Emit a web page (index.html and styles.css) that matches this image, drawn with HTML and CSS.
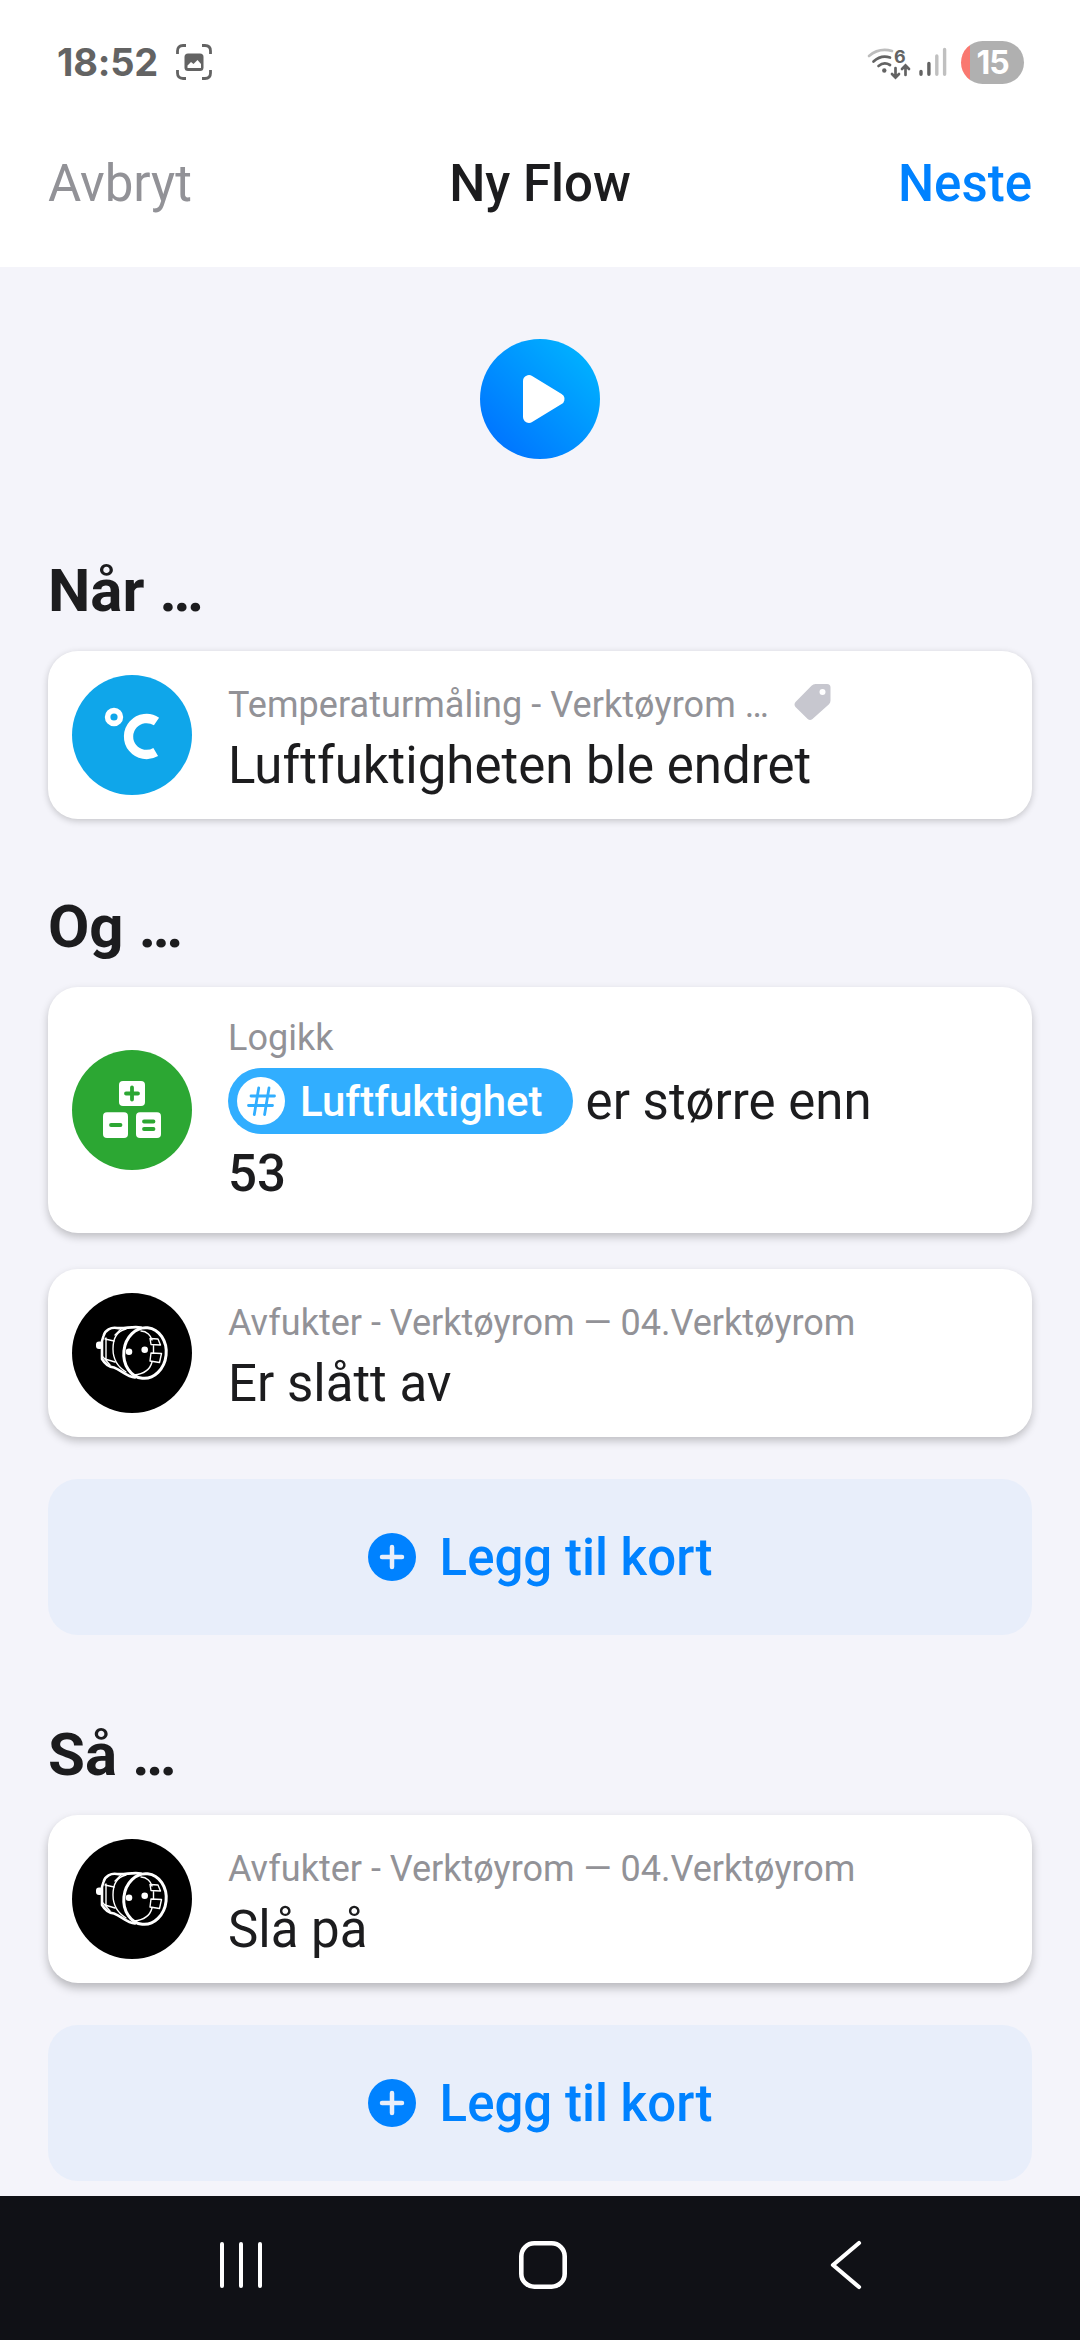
FILE: index.html
```html
<!DOCTYPE html>
<html lang="nb">
<head>
<meta charset="utf-8">
<title>Ny Flow</title>
<link rel="stylesheet" href="styles.css">
</head>
<body>
<svg class="defs" aria-hidden="true">
  <symbol id="plug" viewBox="0 0 120 120">
    <g fill="none" stroke="#fff" stroke-linejoin="round" stroke-linecap="round">
      <ellipse cx="73" cy="60" rx="21.2" ry="25.4" transform="rotate(6 73 60)" stroke-width="3"/>
      <path d="M69 34.500C60 33 53 36 45 35C39 34 33 37 31.500 43L30 48V66C33 71 37 74 42 74.500C49 77 55 84 63 84.500" stroke-width="2.600"/>
      <path d="M54 36C45 38 41 46 41 56C41 66 46 74 54 79" stroke-width="1.400"/>
      <path d="M33 46L42 48M34 45V66M33 66L43 69M31 64L38 72M50 35L43 42" stroke-width="1.400"/>
      <path d="M69 38C75 38 79 43 80 47M80 69C78 77 72 81 62 82" stroke-width="1.400"/>
      <path d="M78 45.500L86 46L88.500 52L79 51.500ZM81.500 52V60M79 60L89.500 60.500L87.500 69.500L78 68Z" stroke-width="1.400"/>
    </g>
    <rect x="24" y="48.500" width="7" height="7.500" rx="3" fill="#fff"/>
    <circle cx="57" cy="58.700" r="3.300" fill="#fff"/>
    <circle cx="72.700" cy="56.700" r="3.300" fill="#fff"/>
  </symbol>
  <symbol id="plus" viewBox="0 0 48 48">
    <circle cx="24" cy="24" r="24" fill="#0082ff"/>
    <path d="M24 14V34M14 24H34" stroke="#e8eefa" stroke-width="4.500" stroke-linecap="round"/>
  </symbol>
</svg>
<div class="screen">
  <header class="top">
    <div class="status">
      <div class="status-side">
        <span class="clock">18:52</span>
        <svg class="shot" viewBox="0 0 36 36">
          <path d="M1.500 10V7Q1.500 1.500 7 1.500H10M26 1.500H29Q34.500 1.500 34.500 7V10M34.500 26V29Q34.500 34.500 29 34.500H26M10 34.500H7Q1.500 34.500 1.500 29V26" fill="none" stroke="#636363" stroke-width="2.800"/>
          <rect x="8.500" y="9.500" width="19" height="17.500" rx="3.500" fill="#636363"/>
          <path d="M11.500 24V21.500L15 18L17.500 20L21.500 16L25 20V24Z" fill="#fff"/>
        </svg>
      </div>
      <div class="status-side">
        <svg class="wifi" viewBox="0 0 46 36">
          <g fill="none" stroke-width="2.700" stroke-linecap="round">
            <path d="M3 12Q13 3.500 26 7" stroke="#bdbdbd"/>
            <path d="M7.500 17.500Q15 10.500 24 13.500M12.500 22Q18 17.500 24 21" stroke="#636363"/>
            <path d="M29.500 24V33M26 30L29.500 33.500L33 30M39.500 31V22M36 25L39.500 21.500L43 25" stroke="#636363"/>
          </g>
          <circle cx="18.300" cy="26.500" r="2.200" fill="#636363"/>
          <text x="28" y="18.500" class="wifi-gen">6</text>
        </svg>
        <svg class="signal" viewBox="0 0 28 30">
          <g stroke-width="3.400" stroke-linecap="round">
            <path d="M2 24.500V27.300M9.900 16.500V27.300" stroke="#636363"/>
            <path d="M17.800 9V27.300M25.600 2.500V27.300" stroke="#c0c0c0"/>
          </g>
        </svg>
        <span class="battery">15</span>
      </div>
    </div>
    <nav class="bar">
      <span class="cancel">Avbryt</span>
      <h1 class="title">Ny Flow</h1>
      <span class="next">Neste</span>
    </nav>
  </header>

  <main class="flow">
    <svg class="play" viewBox="0 0 120 120">
      <defs>
        <linearGradient id="g" x1="0.150" y1="0.850" x2="0.850" y2="0.150">
          <stop offset="0" stop-color="#0077ff"/>
          <stop offset="1" stop-color="#00aeff"/>
        </linearGradient>
      </defs>
      <circle cx="60" cy="60" r="60" fill="url(#g)"/>
      <path d="M49 42V78L78.500 60Z" fill="#fff" stroke="#fff" stroke-width="12" stroke-linejoin="round"/>
    </svg>

    <section class="group">
      <h2 class="heading">Når …</h2>
      <article class="card">
        <svg class="icon" viewBox="0 0 120 120">
          <circle cx="60" cy="60" r="60" fill="#0fa6ea"/>
          <g fill="none" stroke="#fff">
            <circle cx="42" cy="42" r="6.400" stroke-width="5.600"/>
            <path d="M84.500 46.500A18 18 0 1 0 83.700 77" stroke-width="9.300"/>
          </g>
        </svg>
        <div class="text">
          <div class="source tagged"><span>Temperaturmåling - Verktøyrom …</span>
            <svg class="tag" viewBox="0 0 36 36">
              <path d="M21 0H32.500Q36 0 36 3.500V16.500Q36 18.500 34.500 20.200L18 35Q15.500 37 13.200 35L1 23Q-1 20.500 1 18L17 1.800Q18.700 0 21 0Z" fill="#c7c7cf"/>
              <circle cx="28" cy="8" r="3" fill="#fff"/>
            </svg>
          </div>
          <div class="line">Luftfuktigheten ble endret</div>
        </div>
      </article>
    </section>

    <section class="group">
      <h2 class="heading">Og …</h2>
      <article class="card mid">
        <svg class="icon" viewBox="0 0 120 120">
          <circle cx="60" cy="60" r="60" fill="#2ca733"/>
          <g fill="#fff">
            <rect x="47" y="31" width="26" height="25" rx="4"/>
            <rect x="31" y="62.300" width="25" height="25.700" rx="4"/>
            <rect x="64" y="62.300" width="25" height="25.700" rx="4"/>
          </g>
          <path d="M60 37.500V49.500M54 43.500H66M39 75H48.500M72 71.500H81.500M72 79H81.500" fill="none" stroke="#2ca733" stroke-width="3.800" stroke-linecap="round"/>
        </svg>
        <div class="text tall">
          <div class="source">Logikk</div>
          <div class="condition">
            <span class="token">
              <svg class="hash" viewBox="0 0 48 48">
                <circle cx="24" cy="24" r="24" fill="#fff"/>
                <path d="M14 19H37.500M11.500 28.500H35.500M21.700 11L17.300 37.500M32 11L27.600 37.500" stroke="#31aeff" stroke-width="2.800" stroke-linecap="round"/>
              </svg>
              <span>Luftfuktighet</span>
            </span>
            <span class="line">er større enn</span>
          </div>
          <div class="line value">53</div>
        </div>
      </article>
      <article class="card mid">
        <svg class="icon plug"><use href="#plug"/></svg>
        <div class="text">
          <div class="source">Avfukter - Verktøyrom — 04.Verktøyrom</div>
          <div class="line">Er slått av</div>
        </div>
      </article>
      <div class="add"><svg class="plus"><use href="#plus"/></svg><span class="add-label">Legg til kort</span></div>
    </section>

    <section class="group">
      <h2 class="heading">Så …</h2>
      <article class="card low">
        <svg class="icon plug"><use href="#plug"/></svg>
        <div class="text">
          <div class="source">Avfukter - Verktøyrom — 04.Verktøyrom</div>
          <div class="line">Slå på</div>
        </div>
      </article>
      <div class="add"><svg class="plus"><use href="#plus"/></svg><span class="add-label">Legg til kort</span></div>
    </section>
  </main>

  <footer class="system">
    <svg class="nav-icon" viewBox="0 0 52 52"><path d="M7 5V47M26 5V47M45 5V47" stroke="#fff" stroke-width="4" stroke-linecap="round"/></svg>
    <svg class="nav-icon" viewBox="0 0 52 52"><rect x="4.300" y="4.300" width="43.400" height="43.400" rx="13" fill="none" stroke="#fff" stroke-width="4.600"/></svg>
    <svg class="nav-icon" viewBox="0 0 52 52"><path d="M40 4L14 26L40 48" fill="none" stroke="#fff" stroke-width="4.200" stroke-linecap="round" stroke-linejoin="round"/></svg>
  </footer>
</div>
</body>
</html>
```
FILE: styles.css
```css
* { box-sizing: border-box; }

body {
  margin: 0;
  font-family: Roboto, "Liberation Sans", sans-serif;
  color: #1c1c1e;
  background: #f4f4fa;
}

h1, h2 { margin: 0; }
svg { display: block; flex: none; }
.defs { display: none; }

.screen {
  width: 1080px;
  height: 2340px;
  display: flex;
  flex-direction: column;
  overflow: hidden;
}

.top {
  height: 267px;
  flex: none;
  background: #fff;
}

.status {
  height: 124px;
  padding: 0 56px 0 57px;
  display: flex;
  justify-content: space-between;
  align-items: center;
}

.status-side { display: flex; align-items: center; }

.clock {
  width: 119px;
  font: 700 38px/42px Inter, sans-serif;
  letter-spacing: -0.2px;
  color: #636363;
}

.shot { width: 36px; height: 36px; }
.wifi { width: 46px; height: 36px; margin-right: 7px; }

.wifi-gen {
  font: 700 18px Inter, sans-serif;
  fill: #636363;
}

.signal { width: 28px; height: 30px; margin-right: 14px; }

.battery {
  width: 63px;
  height: 43px;
  border-radius: 22px;
  background: linear-gradient(90deg, #f97870 9px, #b0b0b0 9px);
  color: #fff;
  font: 700 32px/43px Inter, sans-serif;
  letter-spacing: -1px;
  text-align: center;
}

.bar {
  height: 120px;
  padding: 0 48px;
  display: grid;
  grid-template-columns: 1fr auto 1fr;
  align-items: center;
  font-size: 51px;
  line-height: 60px;
}

.cancel { color: #929297; }
.title { font-size: 51px; font-weight: 500; }

.next {
  justify-self: end;
  font-weight: 500;
  color: #0082ff;
}

.flow {
  flex: 1;
  padding: 72px 48px 0;
  display: flex;
  flex-direction: column;
}

.play {
  width: 120px;
  height: 120px;
  align-self: center;
  margin-bottom: 24px;
}

.group { padding-top: 72px; }
.group + .group:last-child { padding-top: 84px; }

.heading {
  margin-bottom: 24px;
  font-size: 60px;
  font-weight: 700;
  line-height: 72px;
}

.card {
  min-height: 168px;
  padding: 0 24px;
  display: flex;
  align-items: center;
  gap: 36px;
  border-radius: 30px;
  background: #fff;
  box-shadow: 0 2px 7px rgba(0, 0, 0, 0.2);
}

.card.mid { box-shadow: 0 4px 9px rgba(0, 0, 0, 0.22); }
.card.low { box-shadow: 0 5px 10px rgba(0, 0, 0, 0.25); }
.card + .card { margin-top: 36px; }

.icon { width: 120px; height: 120px; }
.icon.plug { border-radius: 50%; background: #000; }

.text { padding: 10px 0 0; }
.text.tall { padding: 30px 0 29px; }

.source {
  display: flex;
  margin-bottom: 10px;
  font-size: 36px;
  line-height: 42px;
  color: #929297;
}

.tagged { letter-spacing: 0.06px; }
.tall .source { margin-bottom: 9px; }

.tag {
  width: 37px;
  height: 36px;
  margin-left: 25px;
}

.line { font-size: 51px; line-height: 60px; }

.condition { display: flex; align-items: center; gap: 13px; }
.condition .line { padding-top: 2px; }

.token {
  height: 66px;
  padding: 0 30px 0 9px;
  display: flex;
  align-items: center;
  gap: 15px;
  border-radius: 33px;
  background: #31aeff;
  color: #fff;
  font-size: 42px;
  font-weight: 500;
}

.hash, .plus { width: 48px; height: 48px; }

.value { margin-top: 10px; font-weight: 500; }

.add {
  height: 156px;
  margin-top: 42px;
  display: flex;
  justify-content: center;
  align-items: center;
  gap: 24px;
  border-radius: 30px;
  background: #e8eefa;
  color: #0082ff;
  font-size: 51px;
  font-weight: 500;
  line-height: 60px;
}

.add-label { padding-top: 2px; }

.system {
  height: 144px;
  flex: none;
  padding: 0 0 6px 6px;
  display: grid;
  grid-template-columns: 52px 52px 52px;
  column-gap: 250px;
  justify-content: center;
  align-items: center;
  background: #101116;
}
```
